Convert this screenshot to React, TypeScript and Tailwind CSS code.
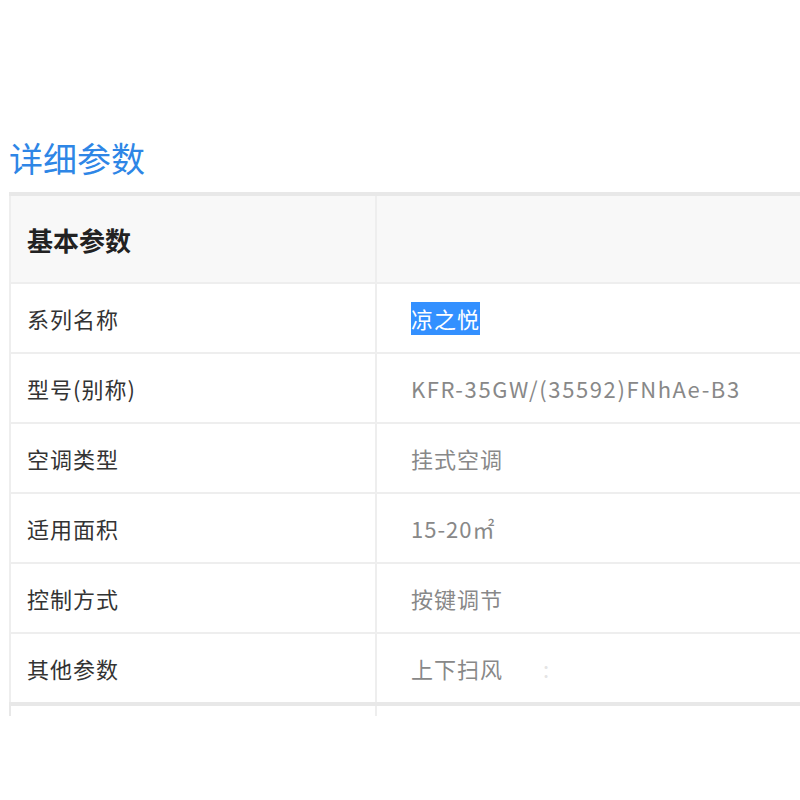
export default function App() {
  const rows: [string, React.ReactNode][] = [
    ["系列名称", <span className="bg-[#3390ff] text-white">凉之悦</span>],
    ["型号(别称)", <span className="tracking-[1.6px]">KFR-35GW/(35592)FNhAe-B3</span>],
    ["空调类型", "挂式空调"],
    ["适用面积", <span className="tracking-[1px]">15-20㎡</span>],
    ["控制方式", "按键调节"],
    ["其他参数", <span>上下扫风<span className="ml-10 text-[#e4e4e4]">:</span></span>],
  ];
  const font = { fontFamily: '"Microsoft YaHei","Noto Sans CJK SC",sans-serif' };
  return (
    <div className="w-[800px] h-[800px] bg-white overflow-hidden" style={font}>
      <div className="pt-[136px] pl-[9px]">
        <div className="text-[34px] leading-[44px] text-[#2e86e6] mb-[12px]">详细参数</div>
        <div className="border-t-[4px] border-[#e8e8e8] w-[820px]">
          <div className="grid grid-cols-[366px_1fr] bg-[#f8f8f8] h-[86px] border-l-2 border-[#eeeeee]">
            <div className="flex items-center pl-[16px] text-[26px] font-bold text-[#222] border-r-2 border-[#eeeeee]">基本参数</div>
            <div></div>
          </div>
          {rows.map(([k, v], i) => (
            <div key={i} className="grid grid-cols-[366px_1fr] h-[70px] border-l-2 border-t-2 border-[#eeeeee] first:border-t-0">
              <div className="flex items-center pl-[16px] text-[22px] tracking-[1px] text-[#333] border-r-2 border-[#eeeeee]">{k}</div>
              <div className="flex items-center pl-[34px] text-[22px] tracking-[1px] text-[#888]">{v}</div>
            </div>
          ))}
          <div className="grid grid-cols-[366px_1fr] h-[14px] border-t-[4px] border-l-2 border-[#e8e8e8]">
            <div className="border-r-2 border-[#eeeeee]"></div>
            <div></div>
          </div>
        </div>
      </div>
    </div>
  );
}
